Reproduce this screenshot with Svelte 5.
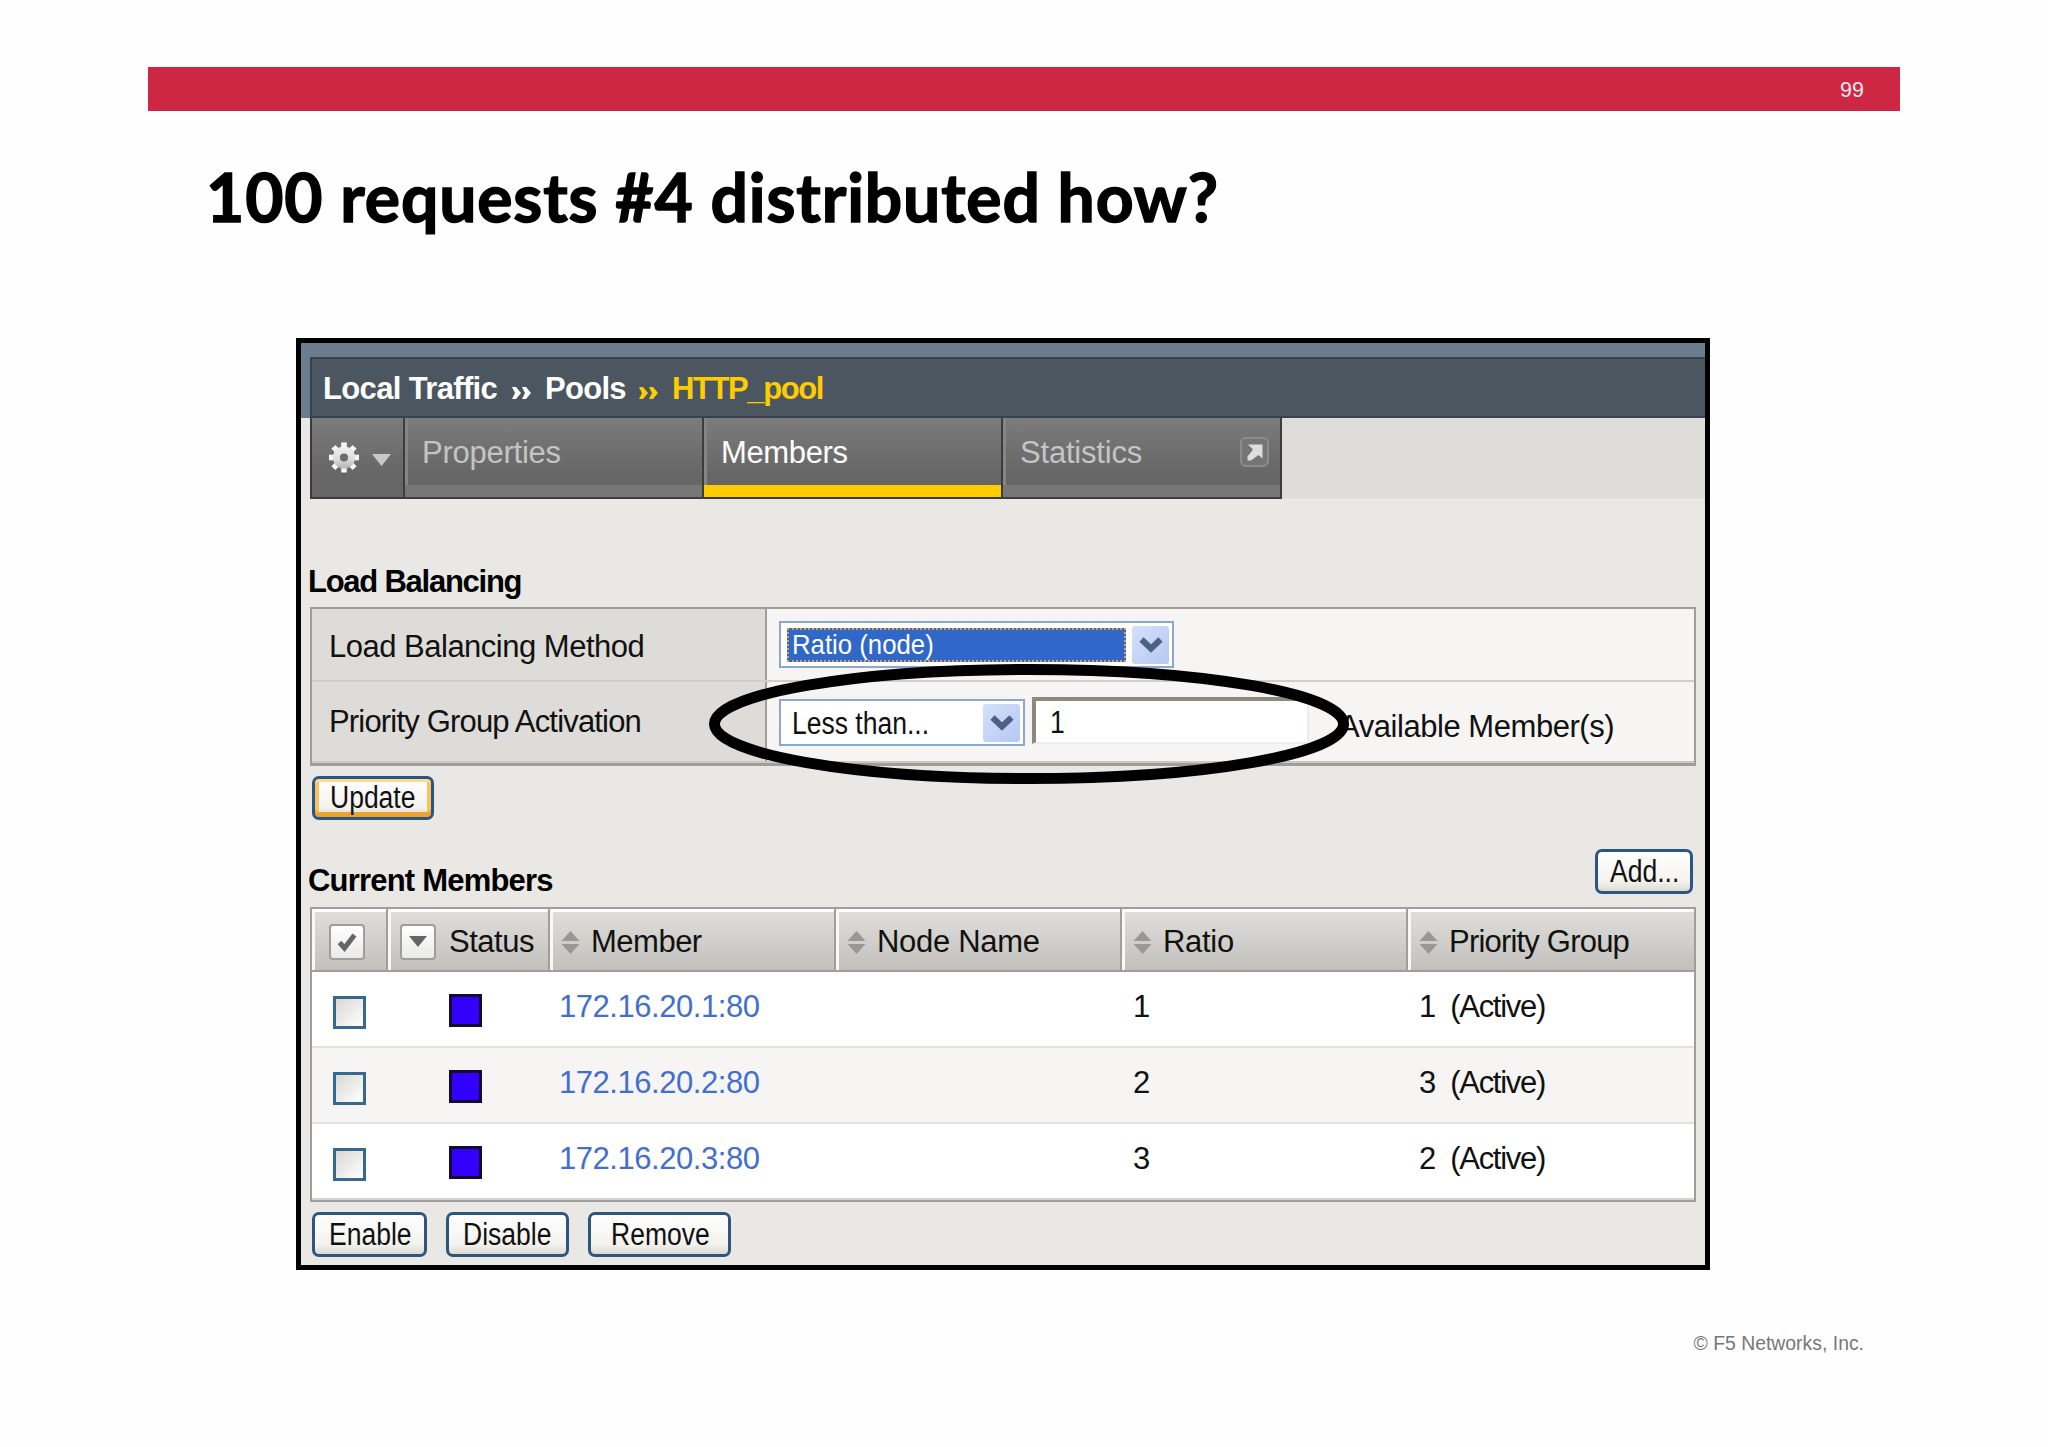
<script>
  const tabs = [
    { label: 'Properties', kind: 'properties' },
    { label: 'Members', kind: 'members', active: true },
    { label: 'Statistics', kind: 'statistics', external: true }
  ];

  const columns = [
    { label: 'Member', kind: 'member' },
    { label: 'Node Name', kind: 'node' },
    { label: 'Ratio', kind: 'ratio' },
    { label: 'Priority Group', kind: 'priority' }
  ];

  const members = [
    { address: '172.16.20.1:80', ratio: 1, priority: 1 },
    { address: '172.16.20.2:80', ratio: 2, priority: 3 },
    { address: '172.16.20.3:80', ratio: 3, priority: 2 }
  ];

  const gearTeeth = [0, 45, 90, 135, 180, 225, 270, 315];
</script>

{#snippet chevron()}
  <span class="select-button">
    <svg width="24" height="18" viewBox="0 0 24 18">
      <path d="M2.5 3.5 L12 12.5 L21.5 3.5" fill="none" stroke="#4d6185" stroke-width="6" />
    </svg>
  </span>
{/snippet}

{#snippet arrows(current)}
  <svg class="arrows" class:current width="20" height="14" viewBox="0 0 20 14">
    <path d="M0 1h4l5 6-5 6H0l3-6zM10 1h4l5 6-5 6h-4l3-6z" />
  </svg>
{/snippet}

<div class="slide">
  <header class="banner">99</header>
  <h1>100 requests #4 distributed how?</h1>

  <main class="window">
    <div class="masthead">
      <nav class="breadcrumb">
        <span class="crumb traffic">Local Traffic</span>
        {@render arrows(false)}
        <span class="crumb pools">Pools</span>
        {@render arrows(true)}
        <span class="crumb current">HTTP_pool</span>
      </nav>
    </div>

    <div class="tab-row">
      <div class="tabs">
        <div class="gear">
          <svg width="30" height="31" viewBox="-15 -15.5 30 31">
            <defs>
              <linearGradient id="gear-fill" x1="0" y1="-15" x2="0" y2="15" gradientUnits="userSpaceOnUse">
                <stop offset="0" stop-color="#f8f8f8" />
                <stop offset="0.55" stop-color="#dddddd" />
                <stop offset="1" stop-color="#a2a2a2" />
              </linearGradient>
            </defs>
            {#each gearTeeth as angle}
              <rect x="-2.8" y="-15" width="5.6" height="8" fill="url(#gear-fill)" transform="rotate({angle})" />
            {/each}
            <circle r="7.6" fill="none" stroke="url(#gear-fill)" stroke-width="7" />
          </svg>
          <svg class="gear-caret" width="19" height="12" viewBox="0 0 19 12">
            <path d="M0 0H19L9.5 12z" fill="#c9c9c9" />
          </svg>
        </div>
        {#each tabs as tab}
          <div class="tab {tab.kind}" class:active={tab.active}>
            <span>{tab.label}</span>
            {#if tab.external}
              <svg width="29" height="30" viewBox="0 0 29 30">
                <rect x="1" y="1" width="27" height="28" rx="5" fill="#757575" stroke="#8c8c8c" stroke-width="2" />
                <path d="M8 7.5H22.5V21.5L18.5 18 L11 23.5 H7.5 V19.5 L13 12.5z" fill="#dedede" />
              </svg>
            {/if}
          </div>
        {/each}
      </div>
    </div>

    <section class="balancing">
      <h2 class="load-title">Load Balancing</h2>
      <div class="settings">
        <div class="setting">
          <div class="name method">Load Balancing Method</div>
          <div class="value">
            <div class="select wide">
              <span class="selected"><span class="control-text">Ratio (node)</span></span>
              {@render chevron()}
            </div>
          </div>
        </div>
        <div class="setting">
          <div class="name activation">Priority Group Activation</div>
          <div class="value">
            <div class="select">
              <span class="plain"><span class="control-text">Less than...</span></span>
              {@render chevron()}
            </div>
            <div class="input"><span class="control-text">1</span></div>
            <span class="available">Available Member(s)</span>
          </div>
        </div>
      </div>
      <button class="update"><span class="control-text">Update</span></button>
    </section>

    <section class="current-members">
      <div class="members-bar">
        <h2>Current Members</h2>
        <button class="add"><span class="control-text">Add...</span></button>
      </div>

      <div class="members-table">
        <div class="row head">
          <div class="cell check">
            <span class="icon-box">
              <svg width="20" height="20" viewBox="0 0 20 20">
                <path d="M2.5 10.5L7.5 16L17.5 3" fill="none" stroke="#656565" stroke-width="5" />
              </svg>
            </span>
          </div>
          <div class="cell status">
            <span class="icon-box">
              <svg width="20" height="12" viewBox="0 0 20 12">
                <path d="M1 0H19L10 11z" fill="#656565" />
              </svg>
            </span>
            <span class="label">Status</span>
          </div>
          {#each columns as column}
            <div class="cell {column.kind}">
              <svg width="19" height="23" viewBox="0 0 19 23">
                <path d="M9.5 0L18.5 10H.5zM.5 13H18.5L9.5 23z" fill="#999895" />
              </svg>
              <span class="label">{column.label}</span>
            </div>
          {/each}
        </div>

        {#each members as member}
          <div class="row">
            <div><span class="checkbox"></span></div>
            <div><span class="state"></span></div>
            <div class="address">{member.address}</div>
            <div></div>
            <div class="number">{member.ratio}</div>
            <div class="number group">
              <span>{member.priority}</span>
              <span class="active-label">(Active)</span>
            </div>
          </div>
        {/each}
      </div>

      <div class="actions">
        <button class="enable"><span class="control-text">Enable</span></button>
        <button class="disable"><span class="control-text">Disable</span></button>
        <button class="remove"><span class="control-text">Remove</span></button>
      </div>
    </section>
  </main>

  <svg class="highlight" width="642" height="122" viewBox="0 0 642 122">
    <ellipse cx="321" cy="61" rx="314.5" ry="54.6" fill="none" stroke="#000" stroke-width="11" />
  </svg>

  <footer>© F5 Networks, Inc.</footer>
</div>

<style>
  :global(body) {
    background: #fff;
  }

  .slide,
  .slide * {
    box-sizing: border-box;
  }

  .slide {
    position: relative;
    width: 2048px;
    height: 1447px;
    padding-top: 67px;
    overflow: hidden;
    background: #fefefe;
    color: #111;
    font-family: "Liberation Sans", Arial, sans-serif;
    font-size: 31px;
    line-height: 40px;
  }

  svg {
    display: block;
    flex-shrink: 0;
  }

  .banner {
    width: 1752px;
    height: 44px;
    margin-left: 148px;
    padding-right: 36px;
    background: #cd2743;
    color: #fbe9ec;
    font-size: 21.5px;
    line-height: 47px;
    text-align: right;
  }

  h1 {
    height: 80px;
    margin: 46px 0 0 206px;
    color: #000;
    font-family: Lato, Carlito, sans-serif;
    font-size: 66px;
    font-weight: 700;
    line-height: 80px;
    letter-spacing: 0.85px;
    white-space: nowrap;
    -webkit-text-stroke: 1.4px #000;
  }

  .window {
    width: 1414px;
    height: 932px;
    margin: 101px 0 0 296px;
    border: 5px solid #000;
    background: #e9e8e4;
    overflow: hidden;
  }

  .masthead {
    height: 75px;
    padding: 14px 0 0 9px;
    background: #6a7d8f;
  }

  .breadcrumb {
    display: flex;
    align-items: center;
    height: 61px;
    padding: 3px 0 0 11px;
    border: 2px solid #38424c;
    border-right: none;
    background: #4b5661;
    color: #fff;
    font-weight: 700;
    white-space: nowrap;
  }

  .arrows {
    margin-top: 7px;
    fill: #fff;
  }

  .arrows.current {
    fill: #fc0;
  }

  .crumb.traffic {
    width: 189px;
    letter-spacing: -0.65px;
  }

  .crumb.pools {
    width: 94px;
    margin-left: 13px;
    letter-spacing: -0.7px;
  }

  .crumb.current {
    margin-left: 13px;
    color: #fc0;
    letter-spacing: -1.4px;
  }

  .tab-row {
    height: 81px;
    padding-left: 9px;
    background: linear-gradient(90deg, #e9e8e4 20px, #deddd9 20px);
  }

  .tabs {
    display: flex;
    width: 972px;
    height: 81px;
    border: 2px solid #3c3c3c;
    border-top: none;
    background: #666;
  }

  .gear {
    display: flex;
    width: 91px;
    padding: 24px 0 0 17px;
    background: linear-gradient(#7c7c7c, #666 70%);
  }

  .gear-caret {
    margin: 12px 0 0 13px;
  }

  .tab {
    display: flex;
    justify-content: space-between;
    padding: 15px 11px 0 17px;
    border-left: 2px solid #3c3c3c;
    box-shadow: inset 0 -12px #777;
    background: linear-gradient(90deg, #858585 3px, transparent 3px), linear-gradient(#7c7c7c, #666 72%);
    color: #c4c4c4;
  }

  .tab svg {
    margin-top: 4px;
  }

  .tab.properties {
    width: 299px;
    letter-spacing: -0.25px;
  }

  .tab.members {
    width: 299px;
    letter-spacing: -0.35px;
  }

  .tab.statistics {
    width: 279px;
    letter-spacing: -0.2px;
  }

  .tab.active {
    box-shadow: inset 0 -12px #fc0;
    color: #fff;
  }

  h2 {
    margin: 0;
    color: #000;
    font-size: 31px;
    font-weight: 700;
    line-height: 40px;
    letter-spacing: -0.8px;
    white-space: nowrap;
  }

  .balancing {
    height: 349px;
    padding: 63px 0 0 9px;
  }

  .load-title {
    margin: 0 0 5px -2px;
    letter-spacing: -1.25px;
  }

  .settings {
    width: 1386px;
    height: 159px;
    border: 2px solid #9f9e9b;
    border-bottom-width: 3px;
  }

  .setting {
    display: flex;
    height: 73px;
    border-bottom: 2px solid #cfcecb;
    white-space: nowrap;
  }

  .setting:last-child {
    height: 81px;
    border-bottom-color: #c9c8c4;
  }

  .name {
    width: 455px;
    padding: 18px 0 0 17px;
    border-right: 2px solid #9f9e9b;
    background: #dddcd8;
    letter-spacing: -0.5px;
  }

  .name.activation {
    letter-spacing: -0.82px;
  }

  .value {
    display: flex;
    flex: 1;
    align-items: flex-start;
    padding: 12px 0 0 12px;
    background: #f6f5f3;
  }

  .setting:last-child .value {
    padding-top: 17px;
  }

  .setting:last-child .name {
    padding-top: 20px;
  }

  .select {
    display: flex;
    justify-content: space-between;
    width: 246px;
    height: 47px;
    padding: 3px;
    border: 2px solid #8aa9c8;
    background: #fff;
  }

  .select.wide {
    width: 395px;
  }

  .selected {
    width: 339px;
    height: 34px;
    margin: 2px 0 0 3px;
    padding-left: 3px;
    border: 2px dotted #d8a24c;
    background: #2f68c8;
    color: #fff;
    font-size: 28px;
    line-height: 30px;
  }

  .plain {
    padding-left: 8px;
    line-height: 40px;
  }

  .control-text {
    display: inline-block;
    transform: scaleX(0.855);
    transform-origin: left;
    white-space: nowrap;
  }

  .selected .control-text {
    transform: scaleX(0.92);
  }

  .select-button {
    display: flex;
    align-items: center;
    justify-content: center;
    width: 37px;
    height: 38px;
    border-radius: 3px;
    background: linear-gradient(135deg, #d4e0fc, #b5c7f3);
  }

  .input {
    width: 277px;
    height: 47px;
    margin: -2px 0 0 7px;
    padding-left: 14px;
    border-style: solid;
    border-width: 4px 2px 2px 4px;
    border-color: #8b8a7d #efeee6 #efeee6 #8b8a7d;
    background: #fff;
    line-height: 43px;
  }

  .available {
    margin: 8px 0 0 30px;
    letter-spacing: -0.45px;
  }

  button {
    display: block;
    height: 45px;
    padding: 0;
    border: 3px solid #2c5680;
    border-radius: 7px;
    background: linear-gradient(#fff, #f3f2ee 75%, #dcdad2);
    color: #111;
    font: inherit;
    line-height: 38px;
    text-align: left;
  }

  .update {
    width: 122px;
    height: 44px;
    margin: 10px 0 0 2px;
    padding-left: 15px;
    box-shadow: inset 0 3px #fbdc95, inset 0 -5px #eda42c, inset 4px 0 #f8c261, inset -4px 0 #f8c261;
  }

  .add {
    width: 98px;
    padding-left: 12px;
  }

  .current-members {
    padding-left: 9px;
  }

  .members-bar {
    display: flex;
    justify-content: space-between;
    width: 1383px;
    height: 59px;
  }

  .members-bar h2 {
    margin: 13px 0 0 -2px;
  }

  .members-bar .add {
    margin-top: 1px;
  }

  .members-table {
    width: 1386px;
    height: 295px;
    border: 2px solid #9f9e9b;
    border-bottom-width: 3px;
    background: #fff;
  }

  .row {
    display: grid;
    grid-template-columns: 76px 162px 286px 286px 286px 286px;
    height: 76px;
    border-bottom: 2px solid #e1e1df;
    background: #fff;
  }

  .row:nth-child(odd) {
    background: #f6f5f3;
  }

  .row:last-child {
    border-bottom-color: #d4d3d0;
  }

  .row.head {
    height: 63px;
    border-bottom: 2px solid #9f9e9b;
    background: linear-gradient(#fff 3px, #dfdedb 3px, #c2c0bc);
  }

  .row:nth-child(2) {
    background: #fff;
  }

  .row:last-child {
    background: #fff;
  }

  .cell {
    display: flex;
    align-items: center;
    padding: 5px 0 0 11px;
    border-right: 2px solid #9f9e9b;
    box-shadow: inset 3px 0 #f8f8f7;
    white-space: nowrap;
  }

  .cell:last-child {
    border-right: none;
  }

  .cell .label {
    margin-left: 11px;
    letter-spacing: -0.5px;
  }

  .cell.check {
    padding-left: 17px;
  }

  .cell.status {
    padding-left: 12px;
  }

  .cell.status .label {
    margin-left: 13px;
  }

  .cell.node .label,
  .cell.ratio .label {
    letter-spacing: -0.3px;
  }

  .cell.priority .label {
    letter-spacing: -0.8px;
  }

  .icon-box {
    display: flex;
    align-items: center;
    justify-content: center;
    width: 36px;
    height: 36px;
    border: 2px solid #9f9e9b;
    border-radius: 4px;
    background: linear-gradient(#fff, #e9e9e8);
  }

  .checkbox {
    display: block;
    width: 33px;
    height: 33px;
    margin: 24px 0 0 21px;
    border: 3px solid #38678f;
    background: linear-gradient(135deg, #d9d8d2, #fff);
  }

  .state {
    display: block;
    width: 33px;
    height: 33px;
    margin: 22px 0 0 61px;
    border: 3px solid #130b30;
    background: #30f;
  }

  .address {
    padding: 15px 0 0 9px;
    color: #426fce;
    letter-spacing: -0.45px;
  }

  .number {
    padding: 15px 0 0 11px;
  }

  .group {
    display: flex;
    gap: 14px;
  }

  .active-label {
    letter-spacing: -1.3px;
  }

  .actions {
    display: flex;
    padding: 10px 0 0 2px;
  }

  .enable {
    width: 115px;
    padding-left: 14px;
  }

  .disable {
    width: 123px;
    margin-left: 19px;
    padding-left: 14px;
  }

  .remove {
    width: 143px;
    margin-left: 19px;
    padding-left: 20px;
  }

  .highlight {
    position: absolute;
    top: 663px;
    left: 708px;
  }

  footer {
    margin: 53px 184px 0 0;
    color: #777;
    font-size: 19.4px;
    text-align: right;
  }
</style>
